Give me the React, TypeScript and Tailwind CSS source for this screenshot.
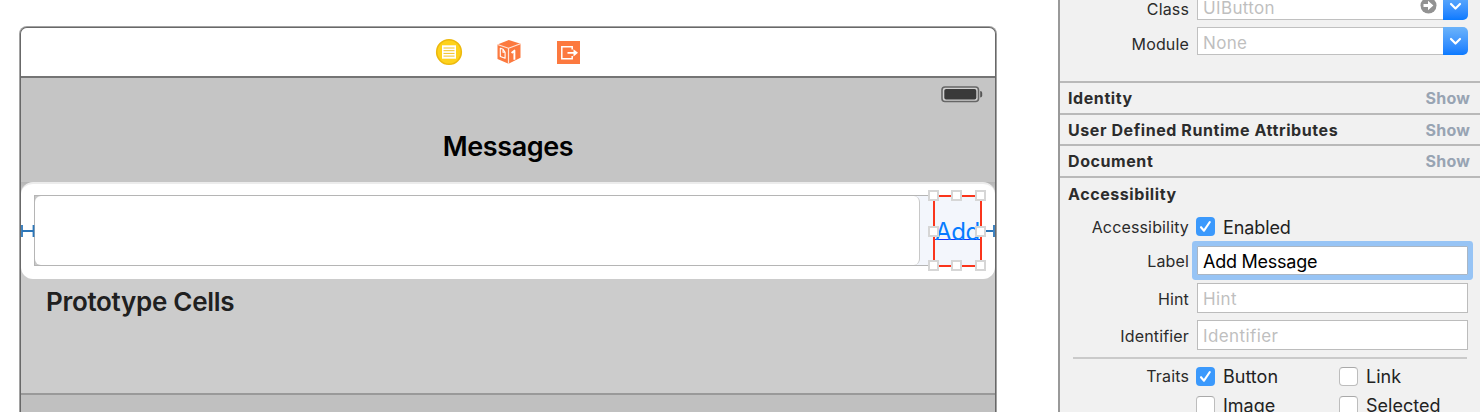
import React from "react";

function Handle({ className }: { className: string }) {
  return <span className={`absolute size-[11px] border-2 border-[#d6d6d6] bg-white ${className}`} />;
}

function Check({ on = false }: { on?: boolean }) {
  return on ? (
    <span className="flex size-[19px] shrink-0 items-center justify-center rounded-[4px] bg-[#3b99fc]">
      <svg width="19" height="19" viewBox="0 0 19 19" fill="none" stroke="white" strokeWidth="2.1" strokeLinecap="round" strokeLinejoin="round">
        <path d="M5 10.2 8 13.7 13.8 5" />
      </svg>
    </span>
  ) : (
    <span className="size-[19px] shrink-0 rounded-[4px] border border-[#bdbdbd] border-t-[#a9a9a9] bg-white" />
  );
}

function RowLabel({ children }: { children: React.ReactNode }) {
  return <span className="w-[129px] shrink-0 text-right text-[16px] tracking-[0.15px] text-[#2b2b2b]">{children}</span>;
}

function Section({ title, className, show = true }: { title: string; className: string; show?: boolean }) {
  return (
    <div className={`flex shrink-0 items-center justify-between border-t-2 border-[#b9b9b9] pl-2 pr-[10px] text-[16px] font-bold ${className}`}>
      <span className="tracking-[0.58px] text-[#2c2c2c]">{title}</span>
      {show && <span className="tracking-[0.2px] text-[#98a4b3]">Show</span>}
    </div>
  );
}

function Combo({ label, value, arrow = false }: { label: string; value: string; arrow?: boolean }) {
  return (
    <div className="flex h-[28px] items-center">
      <div className="flex pt-[5px]"><RowLabel>{label}</RowLabel></div>
      <div className="ml-2 flex h-[28px] w-[246px] items-center border border-r-0 border-[#c0c0c0] bg-white pl-[5px] pr-[6px] pt-[6px] text-[17px] tracking-[0.35px] text-[#bfbfbf]">
        <span className="flex-1">{value}</span>
        {arrow && (
          <svg className="-mt-[7px]" width="17" height="17" viewBox="0 0 17 17">
            <circle cx="8.5" cy="8.5" r="8" fill="#929292" />
            <path d="M3.5 7H8V3.8L13.4 8.5 8 13.2V10H3.5Z" fill="white" />
          </svg>
        )}
      </div>
      <div className="flex h-[28px] w-[25px] items-center justify-center rounded-r-[5px] bg-linear-to-b from-[#6bb3fa] to-[#087aff]">
        <svg width="13" height="9" viewBox="0 0 13 9" fill="none" stroke="white" strokeWidth="2.2" strokeLinecap="round" strokeLinejoin="round">
          <path d="M2 2 6.5 6.5 11 2" />
        </svg>
      </div>
    </div>
  );
}

function Field({ label, placeholder }: { label: string; placeholder: string }) {
  return (
    <div className="flex h-[30px] items-center">
      <div className="flex pt-[2px]"><RowLabel>{label}</RowLabel></div>
      <div className="ml-2 flex h-[30px] w-[271px] items-center border border-[#bcbcbc] bg-white pl-[5px] pt-[3px] text-[17px] tracking-[0.4px] text-[#bfbfbf]">{placeholder}</div>
    </div>
  );
}

function Storyboard() {
  return (
    <div className="ml-[20px] mt-[27px] flex h-[385px] w-[976px] shrink-0 flex-col overflow-hidden rounded-t-[7px] border border-b-0 border-[#686868] bg-[#c0c0c0] ring-1 ring-[#a2a2a2]">
      <div className="flex h-[50px] shrink-0 items-center justify-center border-b-2 border-[#757575] bg-white">
        <div className="flex w-[146px] items-center gap-[34px]">
          <svg width="28" height="28" viewBox="0 0 28 28">
            <circle cx="14" cy="14" r="12.3" fill="#fed21c" stroke="#edb90d" strokeWidth="1.6" />
            <rect x="7" y="7.3" width="14" height="13.4" fill="white" />
            <path d="M8.5 10h11M8.5 12.7h11M8.5 15.4h11M8.5 18.1h11" stroke="#f2c322" strokeWidth="1" />
          </svg>
          <svg className="-ml-[1px]" width="26" height="26" viewBox="0 0 26 26" strokeLinejoin="round">
            <path d="M1.5 5.5 12.8 1 24.5 4.8V18.8L12.5 24.8 1.5 20Z" fill="#fc793f" />
            <path d="M1.5 5.5 12.5 9.2 24.5 4.8M12.5 9.2V24.8" stroke="#ffe4d8" strokeWidth="1.2" fill="none" />
            <path d="M4.3 9.3v8.2l4.8 1.8v-6l-2-3zM7 10.2v3h2" stroke="white" strokeWidth="1.1" fill="none" />
            <path d="m15.6 14 2.8-2.4v9.2" stroke="white" strokeWidth="1.9" fill="none" />
          </svg>
          <svg className="ml-[1px]" width="23" height="23" viewBox="0 0 23 23">
            <path d="M0 0h23v23H0z" fill="#fc793f" />
            <path d="M15.2 8.5V5.7H4.8v12h10.4V15" stroke="white" strokeWidth="1.5" fill="none" />
            <path d="M10.5 11.8h7" stroke="white" strokeWidth="1.7" />
            <path d="m16.5 8.2 4.5 3.6-4.5 3.6z" fill="white" />
          </svg>
        </div>
      </div>
      <div className="flex h-[104px] shrink-0 flex-col bg-[#c5c5c5]">
        <div className="flex justify-end pr-[12px] pt-[8px]">
          <svg width="42" height="17" viewBox="0 0 42 17">
            <rect x="1" y="1" width="36.5" height="14.5" rx="3" fill="#d1d1d1" stroke="#666" strokeWidth="1.6" />
            <rect x="3.3" y="3" width="32" height="10.5" rx="1.8" fill="#3a3a3a" />
            <path d="M39.2 5v6.5q2-.2 2-2V7q0-1.8-2-2" fill="#555" />
          </svg>
        </div>
        <div className="mt-[28px] text-center text-[27px] font-semibold leading-[32px] tracking-[-0.4px] text-black">Messages</div>
      </div>
      <div className="shrink-0 bg-linear-to-b from-[#b4b4b4] to-[#ccc] to-10%">
        <div className="relative h-[97px] rounded-[12px] border-t-2 border-[#ececec] bg-white px-[13px] pt-[11px]">
          <div className="flex h-[71px] w-[947px] border border-[#b5b5b5] bg-[#c8c8c8]">
            <div className="z-[1] h-full w-[885px] rounded-[6px] border-r border-[#c8c8c8] bg-white" />
            <div className="-ml-[6px] flex-1 bg-[#f3f6fc]" />
          </div>
          <svg className="absolute left-0 top-[41px]" width="14" height="12" viewBox="0 0 14 12">
            <path d="M1 0v12M12.5 0v12M1 6h12" stroke="#2c76b9" strokeWidth="1.8" />
          </svg>
          <svg className="absolute left-[963px] top-[41px]" width="11" height="12" viewBox="0 0 11 12">
            <path d="M0 6h9M10 0v12" stroke="#2c76b9" strokeWidth="1.8" />
          </svg>
          <div className="absolute left-[912px] top-[11px] flex h-[72px] w-[49px] items-center justify-center border-2 border-[#fa351c]">
            <span className="h-[17px] border-b border-[#1635ff] text-[24px] leading-[18px] tracking-[-0.3px] text-[#087cff]">Add</span>
            <Handle className="left-[-7px] top-[-7px]" />
            <Handle className="left-[16px] top-[-7px]" />
            <Handle className="left-[40px] top-[-7px]" />
            <Handle className="left-[-7px] top-[29px]" />
            <Handle className="left-[40px] top-[29px]" />
            <Handle className="left-[-7px] top-[63px]" />
            <Handle className="left-[16px] top-[63px]" />
            <Handle className="left-[40px] top-[63px]" />
          </div>
        </div>
      </div>
      <div className="h-[116px] shrink-0 border-b-2 border-[#999] bg-[#ccc] pl-[25px] pt-[7px] text-[26px] font-semibold leading-[32px] tracking-[-0.3px] text-[#202020]">Prototype Cells</div>
    </div>
  );
}

function Inspector() {
  return (
    <div className="flex h-[412px] w-[422px] shrink-0 flex-col overflow-hidden border-l-2 border-[#999] bg-[#f1f1f1]">
      <div className="-mt-[8px] flex h-[89px] shrink-0 flex-col gap-[7px]">
        <Combo label="Class" value="UIButton" arrow />
        <Combo label="Module" value="None" />
      </div>
      <Section title="Identity" className="h-[32px]" />
      <Section title="User Defined Runtime Attributes" className="h-[31px]" />
      <Section title="Document" className="h-[32px]" />
      <Section title="Accessibility" className="h-[33px]" show={false} />
      <div className="mt-[8px] flex h-[19px] shrink-0 items-center">
        <RowLabel>Accessibility</RowLabel>
        <div className="ml-[7px] flex items-center gap-[8px] text-[18px] tracking-[-0.1px] text-[#222]"><Check on /><span className="pt-[1px]">Enabled</span></div>
      </div>
      <div className="mt-[10px] flex h-[29px] shrink-0 items-center">
        <RowLabel>Label</RowLabel>
        <div className="ml-2 flex h-[29px] w-[271px] items-center rounded-[1px] border border-[#aab6c4] bg-white pl-[5px] pt-[2px] text-[18px] tracking-[-0.25px] text-black ring-[5px] ring-[#97c4f5]">Add Message</div>
      </div>
      <div className="mt-[8px] flex shrink-0 flex-col gap-[7px]">
        <Field label="Hint" placeholder="Hint" />
        <Field label="Identifier" placeholder="Identifier" />
      </div>
      <div className="ml-[13px] mt-[7px] h-[2px] w-[394px] shrink-0 bg-[#cacaca]" />
      <div className="mt-[8px] flex shrink-0 items-start text-[18px] leading-[19px] text-[#222]">
        <RowLabel>Traits</RowLabel>
        <div className="ml-[7px] grid grid-cols-[143px_120px] gap-y-[10px]">
          <div className="flex gap-[8px]"><Check on />Button</div>
          <div className="flex gap-[8px]"><Check />Link</div>
          <div className="flex gap-[8px]"><Check />Image</div>
          <div className="flex gap-[8px]"><Check />Selected</div>
        </div>
      </div>
    </div>
  );
}

export default function App() {
  return (
    <div className="flex h-[412px] w-[1480px] justify-between overflow-hidden bg-white font-['Inter',sans-serif]">
      <Storyboard />
      <Inspector />
    </div>
  );
}
